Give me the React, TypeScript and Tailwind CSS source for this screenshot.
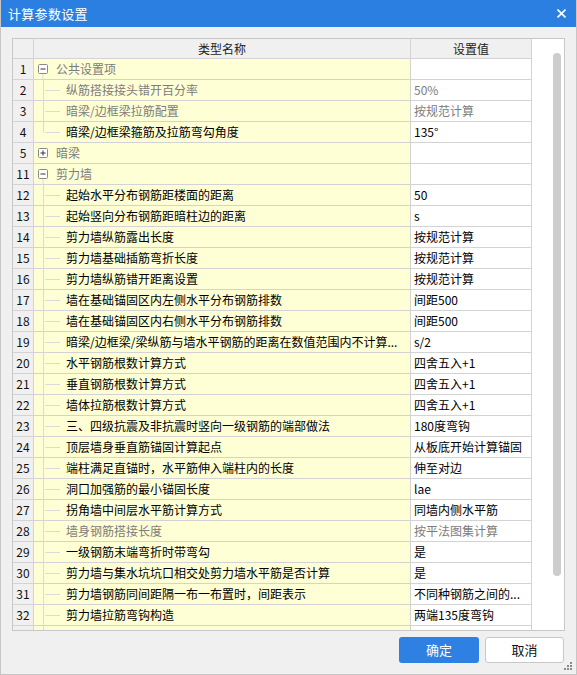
import React from 'react';

type Row = {
    no: number;
    name: string;
    value?: string;
    kind: 'group' | 'child';
    open?: boolean;
    muted?: boolean;
    last?: boolean;
};

const rows: Row[] = [
    { no: 1, name: '公共设置项', kind: 'group', open: true },
    { no: 2, name: '纵筋搭接接头错开百分率', value: '50%', kind: 'child', muted: true },
    { no: 3, name: '暗梁/边框梁拉筋配置', value: '按规范计算', kind: 'child', muted: true },
    { no: 4, name: '暗梁/边框梁箍筋及拉筋弯勾角度', value: '135°', kind: 'child', last: true },
    { no: 5, name: '暗梁', kind: 'group', open: false },
    { no: 11, name: '剪力墙', kind: 'group', open: true },
    { no: 12, name: '起始水平分布钢筋距楼面的距离', value: '50', kind: 'child' },
    { no: 13, name: '起始竖向分布钢筋距暗柱边的距离', value: 's', kind: 'child' },
    { no: 14, name: '剪力墙纵筋露出长度', value: '按规范计算', kind: 'child' },
    { no: 15, name: '剪力墙基础插筋弯折长度', value: '按规范计算', kind: 'child' },
    { no: 16, name: '剪力墙纵筋错开距离设置', value: '按规范计算', kind: 'child' },
    { no: 17, name: '墙在基础锚固区内左侧水平分布钢筋排数', value: '间距500', kind: 'child' },
    { no: 18, name: '墙在基础锚固区内右侧水平分布钢筋排数', value: '间距500', kind: 'child' },
    { no: 19, name: '暗梁/边框梁/梁纵筋与墙水平钢筋的距离在数值范围内不计算...', value: 's/2', kind: 'child' },
    { no: 20, name: '水平钢筋根数计算方式', value: '四舍五入+1', kind: 'child' },
    { no: 21, name: '垂直钢筋根数计算方式', value: '四舍五入+1', kind: 'child' },
    { no: 22, name: '墙体拉筋根数计算方式', value: '四舍五入+1', kind: 'child' },
    { no: 23, name: '三、四级抗震及非抗震时竖向一级钢筋的端部做法', value: '180度弯钩', kind: 'child' },
    { no: 24, name: '顶层墙身垂直筋锚固计算起点', value: '从板底开始计算锚固', kind: 'child' },
    { no: 25, name: '端柱满足直锚时，水平筋伸入端柱内的长度', value: '伸至对边', kind: 'child' },
    { no: 26, name: '洞口加强筋的最小锚固长度', value: 'lae', kind: 'child' },
    { no: 27, name: '拐角墙中间层水平筋计算方式', value: '同墙内侧水平筋', kind: 'child' },
    { no: 28, name: '墙身钢筋搭接长度', value: '按平法图集计算', kind: 'child', muted: true },
    { no: 29, name: '一级钢筋末端弯折时带弯勾', value: '是', kind: 'child' },
    { no: 30, name: '剪力墙与集水坑坑口相交处剪力墙水平筋是否计算', value: '是', kind: 'child' },
    { no: 31, name: '剪力墙钢筋同间距隔一布一布置时，间距表示', value: '不同种钢筋之间的...', kind: 'child' },
    { no: 32, name: '剪力墙拉筋弯钩构造', value: '两端135度弯钩', kind: 'child' },
];

function Expander({ open }: { open?: boolean }) {
    return (
        <svg width="10" height="21" viewBox="0 0 10 21" className="shrink-0">
            <rect x="0.5" y="5.5" width="9" height="9" rx="1" fill="white" stroke="#8a8a8a" />
            <line x1="2.5" y1="10" x2="7.5" y2="10" stroke="#333" />
            {!open && <line x1="5" y1="7.5" x2="5" y2="12.5" stroke="#333" />}
            {open && <line x1="5" y1="15" x2="5" y2="21" stroke="#dadada" />}
        </svg>
    );
}

function Connector({ last }: { last?: boolean }) {
    return (
        <svg width="28" height="21" viewBox="0 0 28 21" className="shrink-0">
            <line x1="5.5" y1="0" x2="5.5" y2={last ? 10.5 : 21} stroke="#dadada" />
            <line x1="7" y1="10.5" x2="22" y2="10.5" stroke="#dadada" />
        </svg>
    );
}

export default function App() {
    return (
        <div
            className="relative w-[577px] h-[675px] bg-[#f0f0f0] flex flex-col border-x border-b border-[#c6c6c6] overflow-hidden"
            style={{ fontFamily: '"Noto Sans CJK SC", "Noto Sans", sans-serif' }}
        >
            {/* Title Bar */}
            <div className="h-[27px] shrink-0 bg-[#2b7fe0] -mx-px flex items-center justify-between pl-[8px] pr-[11px]">
                <span className="text-white text-[13px] leading-none tracking-[0.3px]">计算参数设置</span>
                <svg width="9" height="9" viewBox="0 0 9 9">
                    <line x1="0.5" y1="0.5" x2="8.5" y2="8.5" stroke="white" strokeWidth="1.6" />
                    <line x1="8.5" y1="0.5" x2="0.5" y2="8.5" stroke="white" strokeWidth="1.6" />
                </svg>
            </div>

            {/* Grid Box */}
            <div className="mt-[11px] ml-[11px] w-[553px] h-[593px] border border-[#c8c8c8] bg-white flex overflow-hidden text-[12px]">
                <div className="w-[519px] flex flex-col">
                    {/* Header */}
                    <div className="h-[20px] shrink-0 flex bg-[#f0f0f0] border-b border-[#d3d3d3] text-[#222]">
                        <div className="w-[21px] border-r border-[#d3d3d3]" />
                        <div className="w-[377px] border-r border-[#d3d3d3] flex items-center justify-center">类型名称</div>
                        <div className="w-[121px] border-r border-[#d3d3d3] flex items-center justify-center">设置值</div>
                    </div>

                    {rows.map((r) => {
                        const grey = r.kind === 'group' || r.muted;
                        return (
                            <div key={r.no} className="h-[21px] shrink-0 flex border-b border-[#d3d3d3]">
                                <div className="w-[21px] bg-[#f0f0f0] border-r border-[#d3d3d3] flex items-center justify-center text-[#111]">
                                    {r.no}
                                </div>
                                <div className="w-[377px] bg-[#ffffd5] border-r border-[#d3d3d3] flex items-center pl-[4px] min-w-0">
                                    {r.kind === 'group' ? (
                                        <>
                                            <Expander open={r.open} />
                                            <span className="ml-[8px] text-[#7c7c7c]">{r.name}</span>
                                        </>
                                    ) : (
                                        <>
                                            <Connector last={r.last} />
                                            <span className={`whitespace-nowrap ${grey ? 'text-[#7c7c7c]' : 'text-[#000]'}`}>{r.name}</span>
                                        </>
                                    )}
                                </div>
                                <div className={`w-[121px] border-r border-[#d3d3d3] flex items-center pl-[3px] min-w-0 ${r.muted ? 'text-[#7c7c7c]' : 'text-[#000]'}`}>
                                    <span className="whitespace-nowrap">{r.value}</span>
                                </div>
                            </div>
                        );
                    })}

                    {/* partially visible next row */}
                    <div className="h-[4px] shrink-0 flex overflow-hidden">
                        <div className="w-[21px] bg-[#f0f0f0] border-r border-[#d3d3d3]" />
                        <div className="w-[377px] bg-[#ffffd5] border-r border-[#d3d3d3] pl-[4px] overflow-hidden">
                            <Connector />
                        </div>
                        <div className="w-[121px] border-r border-[#d3d3d3]" />
                    </div>
                </div>

                {/* Scrollbar Track */}
                <div className="w-[32px] pl-[21px] pt-[14px]">
                    <div className="w-[8px] h-[523px] rounded-full bg-[#cdcdcd]" />
                </div>
            </div>

            {/* Footer Buttons */}
            <div className="mt-[6px] flex justify-end gap-[6px] pr-[12px] text-[13px]">
                <button className="w-[80px] h-[26px] rounded-[3px] bg-[#2e80e2] text-white">确定</button>
                <button className="w-[79px] h-[26px] rounded-[3px] bg-white border border-[#c8c8c8] text-[#111]">取消</button>
            </div>

            {/* Resize Grip */}
            <svg width="8" height="8" viewBox="0 0 8 8" className="absolute right-[4px] bottom-[4px]">
                <rect x="6" y="0" width="2" height="2" fill="#8a8a8a" />
                <rect x="3" y="3" width="2" height="2" fill="#8a8a8a" />
                <rect x="6" y="3" width="2" height="2" fill="#8a8a8a" />
                <rect x="0" y="6" width="2" height="2" fill="#8a8a8a" />
                <rect x="3" y="6" width="2" height="2" fill="#8a8a8a" />
                <rect x="6" y="6" width="2" height="2" fill="#8a8a8a" />
            </svg>
        </div>
    );
}
